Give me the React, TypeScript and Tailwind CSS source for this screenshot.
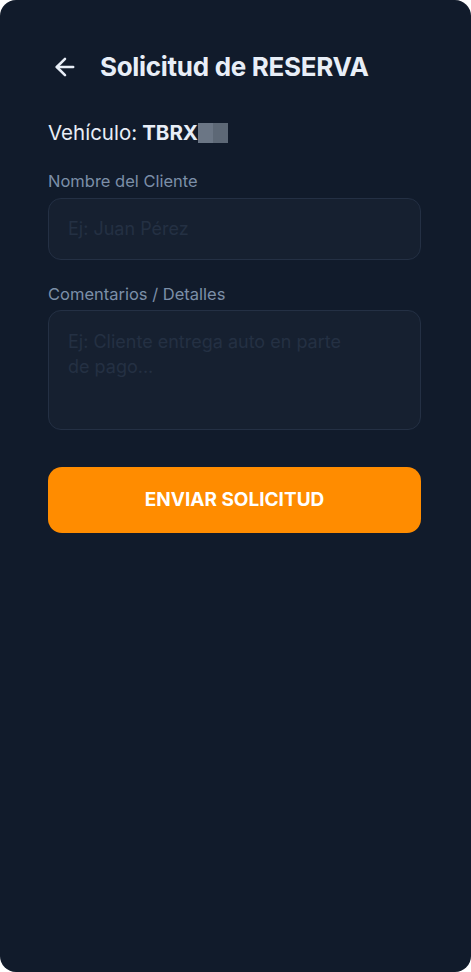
import { ArrowLeft } from "lucide-react";

export default function App() {
  return (
    <div className="h-[972px] w-[471px] bg-white" style={{ fontFamily: "Inter, 'Noto Sans', sans-serif" }}>
      <div className="h-full w-full overflow-hidden rounded-[16px] bg-[#111b2b] pl-[48px] pr-[50px] pt-[47px]">
        {/* header */}
        <div className="flex items-center">
          <ArrowLeft className="ml-[3px] h-[28px] w-[28px] text-[#e8eef7]" strokeWidth={2.2} />
          <h1 className="ml-[21px] text-[26px] font-bold tracking-[-0.3px] text-[#e8eef7]">Solicitud de RESERVA</h1>
        </div>

        <div className="mt-[32px] flex items-center text-[20.5px] text-[#e8eef7]">
          <span>Vehículo:</span>
          <span className="ml-[5px] font-bold">TBRX</span>
          <span className="flex h-[20px]">
            <span className="h-[20px] w-[15px] bg-[#6b7685]" />
            <span className="h-[20px] w-[15px] bg-[#5d6876]" />
          </span>
        </div>

        <label className="mt-[20px] block text-[16.5px] text-[#7c8fa8]">Nombre del Cliente</label>
        <div className="mt-[4px] flex h-[62px] items-center rounded-[13px] border border-[#243044] bg-[#162030] px-[19px]">
          <span className="text-[18px] text-[#243043]">Ej: Juan Pérez</span>
        </div>

        <label className="mt-[22px] block text-[16.5px] text-[#7c8fa8]">Comentarios / Detalles</label>
        <div className="mt-[4px] h-[120px] rounded-[13px] border border-[#243044] bg-[#162030] px-[19px] pt-[18px]">
          <p className="w-[285px] text-[18px] leading-[25px] text-[#243043]">Ej: Cliente entrega auto en parte de pago...</p>
        </div>

        <button className="mt-[37px] flex h-[66px] w-full items-center justify-center rounded-[14px] bg-[#ff8c00] text-[19px] font-bold text-white">
          ENVIAR SOLICITUD
        </button>
      </div>
    </div>
  );
}
